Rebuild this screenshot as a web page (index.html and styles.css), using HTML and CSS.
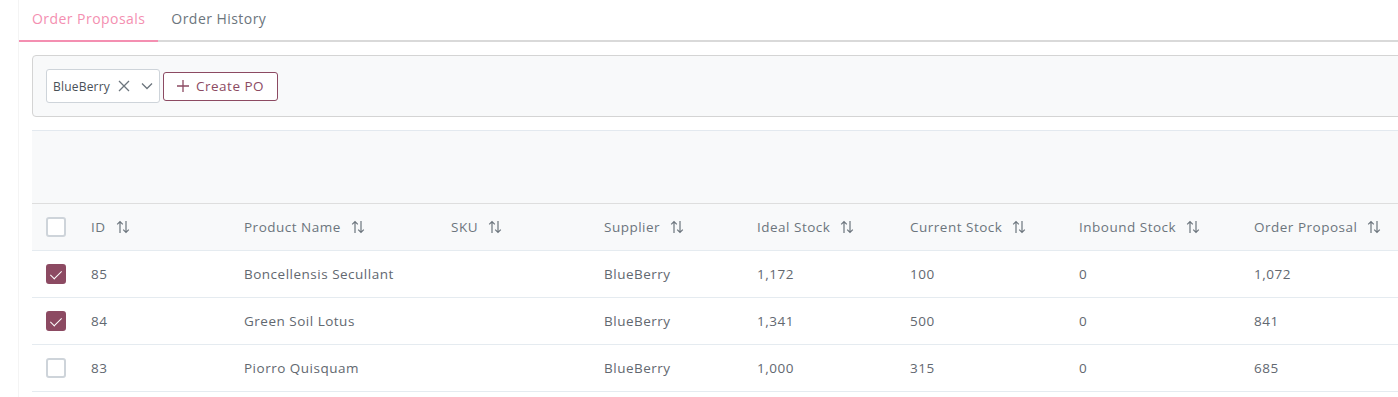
FILE: index.html
```html
<!DOCTYPE html>
<html lang="en">
<head>
    <meta charset="UTF-8">
    <title>Order Proposals</title>
    <link rel="stylesheet" href="styles.css">
</head>
<body>
    <div class="page">
        <div class="tabs">
            <div class="tab active">Order Proposals</div>
            <div class="tab">Order History</div>
        </div>

        <div class="content">
            <div class="toolbar">
                <div class="dropdown">
                    <span class="dropdown-label">BlueBerry</span>
                    <svg class="dropdown-clear" width="12" height="12" viewBox="0 0 12 12"><path d="M1 1 L11 11 M11 1 L1 11" stroke="#6c757d" stroke-width="1.3" fill="none"/></svg>
                    <svg class="dropdown-arrow" width="12" height="12" viewBox="0 0 12 12"><path d="M1 3.5 L6 8.5 L11 3.5" stroke="#6c757d" stroke-width="1.3" fill="none"/></svg>
                </div>
                <button class="create-btn">
                    <svg width="12" height="12" viewBox="0 0 12 12"><path d="M6 0 V12 M0 6 H12" stroke="#8c4a62" stroke-width="1.3" fill="none"/></svg>
                    Create PO
                </button>
            </div>

            <div class="table-wrap">
                <div class="table-caption"></div>
                <table class="grid">
                    <colgroup>
                        <col style="width: 45px">
                        <col style="width: 153px">
                        <col style="width: 207px">
                        <col style="width: 153px">
                        <col style="width: 153px">
                        <col style="width: 153px">
                        <col style="width: 169px">
                        <col style="width: 175px">
                        <col style="width: 200px">
                    </colgroup>
                    <thead>
                        <tr>
                            <th><span class="check"></span></th>
                            <th>ID <i class="sort"></i></th>
                            <th>Product Name <i class="sort"></i></th>
                            <th>SKU <i class="sort"></i></th>
                            <th>Supplier <i class="sort"></i></th>
                            <th>Ideal Stock <i class="sort"></i></th>
                            <th>Current Stock <i class="sort"></i></th>
                            <th>Inbound Stock <i class="sort"></i></th>
                            <th>Order Proposal <i class="sort"></i></th>
                        </tr>
                    </thead>
                    <tbody>
                        <tr>
                            <td><span class="check checked"></span></td>
                            <td>85</td>
                            <td>Boncellensis Secullant</td>
                            <td></td>
                            <td>BlueBerry</td>
                            <td>1,172</td>
                            <td>100</td>
                            <td>0</td>
                            <td>1,072</td>
                        </tr>
                        <tr>
                            <td><span class="check checked"></span></td>
                            <td>84</td>
                            <td>Green Soil Lotus</td>
                            <td></td>
                            <td>BlueBerry</td>
                            <td>1,341</td>
                            <td>500</td>
                            <td>0</td>
                            <td>841</td>
                        </tr>
                        <tr>
                            <td><span class="check"></span></td>
                            <td>83</td>
                            <td>Piorro Quisquam</td>
                            <td></td>
                            <td>BlueBerry</td>
                            <td>1,000</td>
                            <td>315</td>
                            <td>0</td>
                            <td>685</td>
                        </tr>
                    </tbody>
                </table>
            </div>
        </div>
    </div>

    <script>
        // sort icons: same glyph for every header
        document.querySelectorAll('.sort').forEach(function (el) {
            el.innerHTML = '<svg width="14" height="14" viewBox="0 0 14 14"><path d="M4 13 V1.5 M1.2 4.3 L4 1.5 L6.8 4.3 M10 1 V12.5 M7.2 9.7 L10 12.5 L12.8 9.7" stroke="#6c757d" stroke-width="1.2" fill="none"/></svg>';
        });
    </script>
</body>
</html>
```

FILE: styles.css
```css
* {
    margin: 0;
    padding: 0;
    box-sizing: border-box;
}

body {
    font-family: "Open Sans", "Liberation Sans", sans-serif;
    font-size: 13.5px;
    letter-spacing: 0.5px;
    color: #495057;
    background: #fff;
    overflow: hidden;
}

.page {
    padding-left: 19px;
    width: 1440px;
    min-height: 397px;
    background: linear-gradient(to right, #fff 18px, #f4f4f4 18px, #f4f4f4 19px, #fff 19px);
}

.tabs {
    display: flex;
    border-bottom: 2px solid #d9d9d9;
    height: 42px;
}

.tab {
    padding: 0 13px;
    height: 42px;
    line-height: 38px;
    font-size: 14px;
    letter-spacing: 0.45px;
    color: #6c757d;
    margin-bottom: -2px;
    border-bottom: 2px solid transparent;
}

.tab.active {
    color: #f48fb1;
    border-bottom-color: #f48fb1;
}

.content {
    padding: 13px 0 0 13px;
}

.toolbar {
    background: #f8f9fa;
    border: 1px solid #d4d4d4;
    border-radius: 4px;
    height: 62px;
    display: flex;
    align-items: center;
    padding: 0 0 0 13px;
    gap: 3px;
}

.dropdown {
    display: flex;
    align-items: center;
    background: #fff;
    border: 1px solid #ced4da;
    border-radius: 3px;
    height: 34px;
    width: 114px;
    padding: 0 6px;
}

.dropdown-label {
    font-size: 12px;
    letter-spacing: 0.2px;
    color: #495057;
    flex: 1;
}

.dropdown-clear {
    margin-right: 11px;
}

.create-btn {
    display: flex;
    align-items: center;
    gap: 7px;
    height: 29px;
    padding: 0 13px;
    border: 1px solid #8c4a62;
    border-radius: 3px;
    background: #fff;
    color: #8c4a62;
    font-family: inherit;
    font-size: 13.5px;
    letter-spacing: 0.5px;
}

.table-wrap {
    margin-top: 13px;
}

.table-caption {
    height: 74px;
    background: #f8f9fa;
    border-top: 1px solid #e3e9ef;
    border-bottom: 1px solid #dedede;
}

.grid {
    border-collapse: collapse;
    table-layout: fixed;
    width: 1408px;
}

.grid th,
.grid td {
    text-align: left;
    padding: 0 14px;
    height: 47px;
    border-bottom: 1px solid #e5ebf0;
    white-space: nowrap;
}

.grid th {
    height: 46px;
    background: #f8f9fa;
    font-weight: 400;
    color: #6c757d;
}

.grid td {
    color: #626870;
}

.sort {
    display: inline-block;
    vertical-align: middle;
    margin-left: 6px;
    margin-top: -2px;
    height: 14px;
}

.sort svg {
    display: block;
}

.check {
    display: block;
    width: 20px;
    height: 20px;
    border: 2px solid #ced4da;
    border-radius: 3px;
    background: #fff;
}

.check.checked {
    border-color: #8c4a62;
    background: #8c4a62;
    position: relative;
}

.check.checked::after {
    content: "";
    position: absolute;
    left: 5px;
    top: 2px;
    width: 5px;
    height: 10px;
    border: solid #fff;
    border-width: 0 1.5px 1.5px 0;
    transform: rotate(45deg);
}
```
